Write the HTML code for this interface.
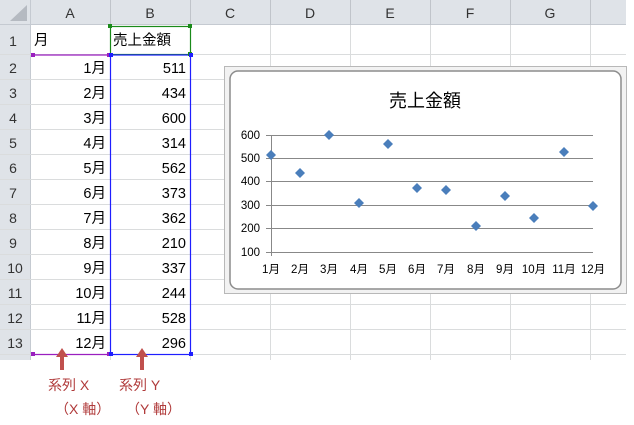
<!DOCTYPE html>
<html><head><meta charset="utf-8"><style>
html,body{margin:0;padding:0;background:#fff;}
svg{display:block;font-family:"Liberation Sans","Noto Sans CJK JP",sans-serif;}
</style></head><body>
<svg width="634" height="425" viewBox="0 0 634 425" xmlns="http://www.w3.org/2000/svg">
<rect width="634" height="425" fill="#fff"/>
<rect x="0" y="0" width="626" height="25" fill="#dfe3e8"/>
<rect x="0" y="25" width="31" height="335" fill="#dfe3e8"/>
<polygon points="10,21 27,21 27,5" fill="#b5bac1"/>
<g stroke="#c5cad1" stroke-width="1">
<line x1="30.5" y1="0" x2="30.5" y2="360"/>
<line x1="0" y1="24.5" x2="626" y2="24.5"/>
</g>
<g stroke="#c0c4ca" stroke-width="1">
<line x1="110.5" y1="0" x2="110.5" y2="25"/><line x1="190.5" y1="0" x2="190.5" y2="25"/>
<line x1="270.5" y1="0" x2="270.5" y2="25"/><line x1="350.5" y1="0" x2="350.5" y2="25"/>
<line x1="430.5" y1="0" x2="430.5" y2="25"/><line x1="510.5" y1="0" x2="510.5" y2="25"/>
<line x1="590.5" y1="0" x2="590.5" y2="25"/>
</g>
<g stroke="#dadcdd" stroke-width="1">
<line x1="110.5" y1="25" x2="110.5" y2="360"/><line x1="190.5" y1="25" x2="190.5" y2="360"/>
<line x1="270.5" y1="25" x2="270.5" y2="360"/><line x1="350.5" y1="25" x2="350.5" y2="360"/>
<line x1="430.5" y1="25" x2="430.5" y2="360"/><line x1="510.5" y1="25" x2="510.5" y2="360"/>
<line x1="590.5" y1="25" x2="590.5" y2="360"/>
<line x1="0" y1="54.5" x2="626" y2="54.5"/>
<line x1="0" y1="79.5" x2="626" y2="79.5"/><line x1="0" y1="104.5" x2="626" y2="104.5"/>
<line x1="0" y1="129.5" x2="626" y2="129.5"/><line x1="0" y1="154.5" x2="626" y2="154.5"/>
<line x1="0" y1="179.5" x2="626" y2="179.5"/><line x1="0" y1="204.5" x2="626" y2="204.5"/>
<line x1="0" y1="229.5" x2="626" y2="229.5"/><line x1="0" y1="254.5" x2="626" y2="254.5"/>
<line x1="0" y1="279.5" x2="626" y2="279.5"/><line x1="0" y1="304.5" x2="626" y2="304.5"/>
<line x1="0" y1="329.5" x2="626" y2="329.5"/><line x1="0" y1="354.5" x2="626" y2="354.5"/>
</g>
<g font-size="14" fill="#333" text-anchor="middle">
<text x="70" y="18">A</text><text x="150" y="18">B</text><text x="230" y="18">C</text>
<text x="310" y="18">D</text><text x="390" y="18">E</text><text x="470" y="18">F</text><text x="550" y="18">G</text>
</g>
<g font-size="14" fill="#333" text-anchor="middle">
<text x="13" y="46">1</text><text x="13" y="73">2</text><text x="13" y="98">3</text><text x="13" y="123">4</text>
<text x="13" y="148">5</text><text x="13" y="173">6</text><text x="13" y="198">7</text><text x="13" y="223">8</text>
<text x="13" y="248">9</text><text x="15" y="273">10</text><text x="15" y="298">11</text><text x="15" y="323">12</text><text x="15" y="348">13</text>
</g>
<g font-size="14.5" fill="#000">
<text x="34" y="45">月</text><text x="113" y="45">売上金額</text>
</g>
<g font-size="14.5" fill="#000" text-anchor="end">
<text x="106" y="73">1月</text><text x="106" y="98">2月</text><text x="106" y="123">3月</text><text x="106" y="148">4月</text>
<text x="106" y="173">5月</text><text x="106" y="198">6月</text><text x="106" y="223">7月</text><text x="106" y="248">8月</text>
<text x="106" y="273">9月</text><text x="106" y="298">10月</text><text x="106" y="323">11月</text><text x="106" y="348">12月</text>
<text x="186" y="73">511</text><text x="186" y="98">434</text><text x="186" y="123">600</text><text x="186" y="148">314</text>
<text x="186" y="173">562</text><text x="186" y="198">373</text><text x="186" y="223">362</text><text x="186" y="248">210</text>
<text x="186" y="273">337</text><text x="186" y="298">244</text><text x="186" y="323">528</text><text x="186" y="348">296</text>
</g>
<rect x="110.5" y="26.5" width="80" height="28" fill="none" stroke="#1a8a1a" stroke-width="1.2"/>
<line x1="32" y1="55" x2="110" y2="55" stroke="#9a1fbf" stroke-width="1.2"/>
<line x1="32" y1="354.5" x2="110" y2="354.5" stroke="#9a1fbf" stroke-width="1.2"/>
<rect x="110.5" y="55" width="80" height="299.5" fill="none" stroke="#1f1fff" stroke-width="1.2"/>
<rect x="108" y="24" width="4" height="4" fill="#1a8a1a"/><rect x="188" y="24" width="4" height="4" fill="#1a8a1a"/>
<rect x="188" y="52" width="4" height="4" fill="#1a8a1a"/>
<rect x="31" y="53" width="4" height="4" fill="#9a1fbf"/><rect x="31" y="352" width="4" height="4" fill="#9a1fbf"/>
<rect x="107" y="53" width="4" height="4" fill="#9a1fbf"/><rect x="107" y="352" width="4" height="4" fill="#9a1fbf"/>
<rect x="109" y="53" width="4" height="4" fill="#1f1fff"/><rect x="189" y="53" width="4" height="4" fill="#1f1fff"/>
<rect x="109" y="352" width="4" height="4" fill="#1f1fff"/><rect x="189" y="352" width="4" height="4" fill="#1f1fff"/>
<rect x="224.5" y="66.5" width="402" height="227" fill="#f2f2f2" stroke="#b8b8b8"/>
<rect x="230" y="71" width="391" height="218" rx="8" fill="#fff" stroke="#8c8c8c" stroke-width="1.5"/>
<text x="425" y="107" font-size="18" text-anchor="middle" fill="#000">売上金額</text>
<g stroke="#888" stroke-width="1">
<line x1="266" y1="135.5" x2="593" y2="135.5"/><line x1="266" y1="158.5" x2="593" y2="158.5"/>
<line x1="266" y1="181.5" x2="593" y2="181.5"/><line x1="266" y1="205.5" x2="593" y2="205.5"/>
<line x1="266" y1="228.5" x2="593" y2="228.5"/><line x1="266" y1="252.5" x2="593" y2="252.5"/>
<line x1="271.5" y1="135" x2="271.5" y2="256"/>
</g>
<g font-size="11.5" fill="#000" text-anchor="end">
<text x="260" y="139">600</text><text x="260" y="162">500</text><text x="260" y="185">400</text>
<text x="260" y="209">300</text><text x="260" y="232">200</text><text x="260" y="256">100</text>
</g>
<g font-size="11.5" fill="#000" text-anchor="middle">
<text x="271" y="273">1月</text><text x="300" y="273">2月</text><text x="329" y="273">3月</text><text x="359" y="273">4月</text>
<text x="388" y="273">5月</text><text x="417" y="273">6月</text><text x="446" y="273">7月</text><text x="476" y="273">8月</text>
<text x="505" y="273">9月</text><text x="534" y="273">10月</text><text x="564" y="273">11月</text><text x="593" y="273">12月</text>
</g>
<g fill="#4a7ebb">
<path d="M271 150l5 5-5 5-5-5z"/><path d="M300 168l5 5-5 5-5-5z"/><path d="M329 130l5 5-5 5-5-5z"/>
<path d="M359 198l5 5-5 5-5-5z"/><path d="M388 139l5 5-5 5-5-5z"/><path d="M417 183l5 5-5 5-5-5z"/>
<path d="M446 185l5 5-5 5-5-5z"/><path d="M476 221l5 5-5 5-5-5z"/><path d="M505 191l5 5-5 5-5-5z"/>
<path d="M534 213l5 5-5 5-5-5z"/><path d="M564 147l5 5-5 5-5-5z"/><path d="M593 201l5 5-5 5-5-5z"/>
</g>
<g fill="#c0504d">
<path d="M62 348l-6 9h4v13h4v-13h4z"/>
<path d="M142 348l-6 9h4v13h4v-13h4z"/>
</g>
<g font-size="14" fill="#b03a3a">
<text x="48" y="390">系列 X</text><text x="55" y="414">（X 軸）</text>
<text x="119" y="390">系列 Y</text><text x="126" y="414">（Y 軸）</text>
</g>
</svg>
</body></html>
